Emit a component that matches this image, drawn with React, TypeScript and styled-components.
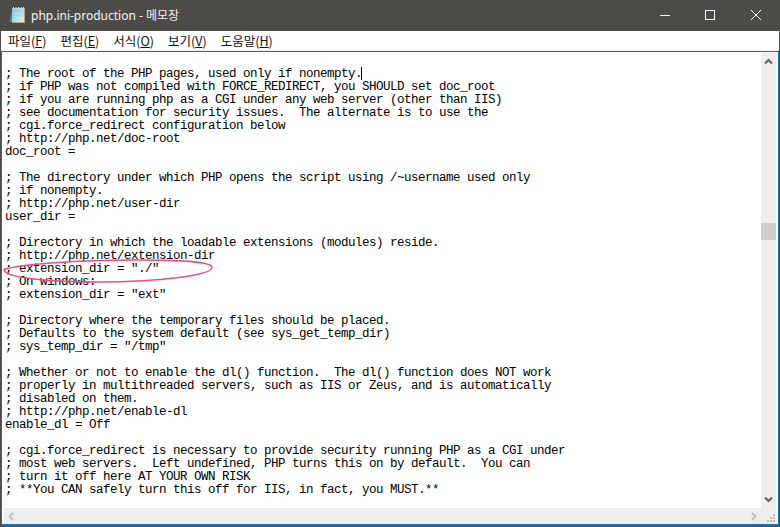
import React from "react";
import styled, { createGlobalStyle } from "styled-components";

const GlobalStyle = createGlobalStyle`
  html, body {
    margin: 0;
    padding: 0;
    background: #4c4b48;
  }
  #root {
    width: 780px;
    height: 527px;
  }
`;

const Window = styled.div`
  width: 780px;
  height: 527px;
  box-sizing: border-box;
  display: flex;
  flex-direction: column;
  overflow: hidden;
  padding: 0 1px 1px;
  background: #4c4b48;
`;

const TitleBar = styled.div`
  height: 31px;
  flex: none;
  display: flex;
  align-items: flex-start;
  color: #fff;
  font-family: "Noto Sans", "Noto Sans CJK KR", sans-serif;
  font-size: 12px;
`;

const AppIcon = styled.svg`
  margin: 7px 5px 0 8px;
  flex: none;
`;

const TitleText = styled.div`
  flex: 1;
  color: #f4f4f3;
  line-height: 32px;
`;

const WinButton = styled.div`
  width: 46px;
  height: 30px;
  display: flex;
  align-items: center;
  justify-content: center;
`;

const Menu = styled.div`
  height: 19px;
  flex: none;
  display: flex;
  align-items: center;
  background: #fff;
  border-bottom: 1px solid #f0f0f0;
`;

const MenuItem = styled.div`
  padding: 0 7px;
  color: #111;
  font-family: "Noto Sans CJK KR", sans-serif;
  font-size: 12.5px;
  line-height: 19px;
  & u {
    text-underline-offset: 1px;
  }
`;

const Frame = styled.div`
  flex: 1;
  min-height: 0;
  display: flex;
  flex-direction: column;
  padding: 1px 2px 0;
  background: #fff;
  border: solid #0a74c8;
  border-width: 1px 1px 2px;
`;

const Body = styled.div`
  flex: 1;
  min-height: 0;
  display: flex;
`;

const Editor = styled.div`
  position: relative;
  flex: 1;
  padding: 14px 0 0 1px;
  background: #fff;
`;

const Code = styled.pre`
  margin: 0;
  color: #000;
  font-family: "Liberation Mono", monospace;
  font-size: 12.5px;
  letter-spacing: -0.5px;
  line-height: 13px;
`;

const Caret = styled.span`
  display: inline-block;
  width: 1px;
  height: 13px;
  margin-left: -1px;
  margin-bottom: -3px;
  background: #000;
`;

const Highlight = styled.svg`
  position: absolute;
  left: -3px;
  top: 203px;
  pointer-events: none;
`;

const VScroll = styled.div`
  width: 15px;
  flex: none;
  display: flex;
  flex-direction: column;
  background: #eeeeee;
`;

const Arrow = styled.div`
  height: 17px;
  flex: none;
  display: flex;
  align-items: center;
  justify-content: center;
`;

const TrackGap = styled.div<{ $h: number }>`
  height: ${(p) => p.$h}px;
  flex: none;
`;

const Thumb = styled.div`
  height: 17px;
  flex: none;
  background: #cdcdcd;
`;

const HScroll = styled.div`
  height: 16px;
  flex: none;
  display: flex;
  align-items: center;
  background: #eeeeee;
`;

const HArrow = styled.div`
  width: 15px;
  height: 16px;
  flex: none;
  display: flex;
  align-items: center;
  justify-content: center;
`;

const HTrack = styled.div`
  flex: 1;
`;

const Grip = styled.div`
  width: 15px;
  height: 16px;
  flex: none;
  display: flex;
  align-items: flex-end;
  justify-content: flex-end;
  padding: 0 1px 2px 0;
  box-sizing: border-box;
`;

const firstLine = `; The root of the PHP pages, used only if nonempty.`;
const rest = `
; if PHP was not compiled with FORCE_REDIRECT, you SHOULD set doc_root
; if you are running php as a CGI under any web server (other than IIS)
; see documentation for security issues.  The alternate is to use the
; cgi.force_redirect configuration below
; http://php.net/doc-root
doc_root =

; The directory under which PHP opens the script using /~username used only
; if nonempty.
; http://php.net/user-dir
user_dir =

; Directory in which the loadable extensions (modules) reside.
; http://php.net/extension-dir
; extension_dir = "./"
; On windows:
; extension_dir = "ext"

; Directory where the temporary files should be placed.
; Defaults to the system default (see sys_get_temp_dir)
; sys_temp_dir = "/tmp"

; Whether or not to enable the dl() function.  The dl() function does NOT work
; properly in multithreaded servers, such as IIS or Zeus, and is automatically
; disabled on them.
; http://php.net/enable-dl
enable_dl = Off

; cgi.force_redirect is necessary to provide security running PHP as a CGI under
; most web servers.  Left undefined, PHP turns this on by default.  You can
; turn it off here AT YOUR OWN RISK
; **You CAN safely turn this off for IIS, in fact, you MUST.**`;

const menus: [string, string][] = [
  ["파일", "F"],
  ["편집", "E"],
  ["서식", "O"],
  ["보기", "V"],
  ["도움말", "H"],
];

function Chevron({ d, color }: { d: string; color: string }) {
  return (
    <svg width="9" height="9" viewBox="0 0 9 9">
      <path d={d} fill="none" stroke={color} strokeWidth="2" />
    </svg>
  );
}

export default function App() {
  return (
    <Window>
      <GlobalStyle />
      <TitleBar>
        <AppIcon width="17" height="17" viewBox="0 0 17 17">
          <defs>
            <linearGradient id="page" x1="0" y1="0" x2="1" y2="1">
              <stop offset="0" stopColor="#7cc0d8" />
              <stop offset="1" stopColor="#dff1f4" />
            </linearGradient>
          </defs>
          <path d="M3 4 L0 15 H4 Z" fill="#3f7fa8" />
          <rect x="3" y="1" width="13" height="15" fill="#b5a47e" />
          <rect x="3" y="1" width="12" height="14" fill="url(#page)" />
          <path d="M5 6.5 H14 M5 9.5 H14 M5 12.5 H14" stroke="#bfe3ec" />
          <path
            d="M4.5 0 V2.5 M7 0 V2.5 M9.5 0 V2.5 M12 0 V2.5 M14.5 0 V2.5"
            stroke="#dfe6e8"
          />
        </AppIcon>
        <TitleText>php.ini-production - 메모장</TitleText>
        <WinButton>
          <svg width="12" height="10" viewBox="0 0 12 10">
            <path d="M2 5.5 H12" stroke="#fff" />
          </svg>
        </WinButton>
        <WinButton>
          <svg width="10" height="10" viewBox="0 0 10 10">
            <rect x="0.5" y="0.5" width="9" height="9" fill="none" stroke="#fff" />
          </svg>
        </WinButton>
        <WinButton>
          <svg width="10" height="10" viewBox="0 0 10 10">
            <path d="M0 0 L10 10 M10 0 L0 10" stroke="#fff" />
          </svg>
        </WinButton>
      </TitleBar>
      <Menu>
        {menus.map(([label, key]) => (
          <MenuItem key={key}>
            {label}(<u>{key}</u>)
          </MenuItem>
        ))}
      </Menu>
      <Frame>
        <Body>
          <Editor>
            <Code>
              {firstLine}
              <Caret />
              {rest}
            </Code>
            <Highlight width="216" height="30" viewBox="0 0 216 30">
              <path
                d="M3 13.5 C19 8 79 4 132 4 C174 4 211 5 211 11.5 C211 19 159 26 99 26 C49 26 3 22 3 13.5 Z"
                fill="none"
                stroke="#ee4a85"
                strokeWidth="1.5"
              />
            </Highlight>
          </Editor>
          <VScroll>
            <Arrow>
              <Chevron d="M1 6.5 L4.5 3 L8 6.5" color="#606060" />
            </Arrow>
            <TrackGap $h={153} />
            <Thumb />
            <TrackGap $h={251} />
            <Arrow>
              <Chevron d="M1 2.5 L4.5 6 L8 2.5" color="#606060" />
            </Arrow>
          </VScroll>
        </Body>
        <HScroll>
          <HArrow>
            <Chevron d="M6 1 L2.5 4.5 L6 8" color="#c4c4c4" />
          </HArrow>
          <HTrack />
          <HArrow>
            <Chevron d="M3 1 L6.5 4.5 L3 8" color="#c4c4c4" />
          </HArrow>
          <Grip>
            <svg width="8" height="8" viewBox="0 0 8 8">
              <path
                d="M6 0 h2 v2 h-2 Z M3 3 h2 v2 h-2 Z M6 3 h2 v2 h-2 Z M0 6 h2 v2 h-2 Z M3 6 h2 v2 h-2 Z M6 6 h2 v2 h-2 Z"
                fill="#bdbdbd"
              />
            </svg>
          </Grip>
        </HScroll>
      </Frame>
    </Window>
  );
}
